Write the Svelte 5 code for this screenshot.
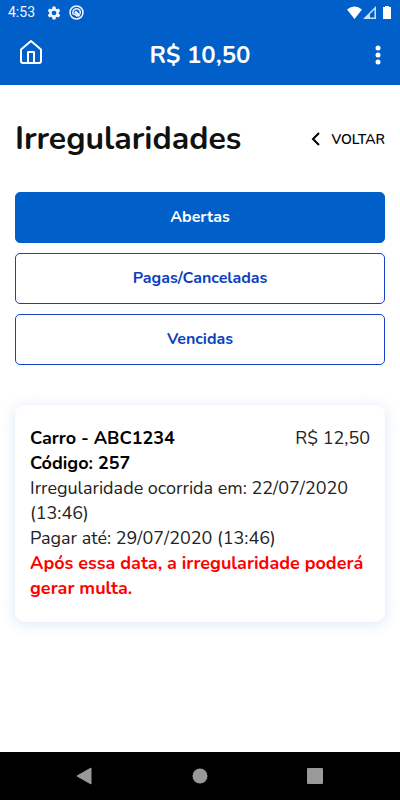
<script lang="ts">
  interface Fine {
    vehicle: string;
    code: number;
    amount: string;
    occurredAt: string;
    payUntil: string;
  }

  const balance = 'R$ 10,50';
  const filters = ['Abertas', 'Pagas/Canceladas', 'Vencidas'];
  const fines: Fine[] = [
    {
      vehicle: 'Carro - ABC1234',
      code: 257,
      amount: 'R$ 12,50',
      occurredAt: '22/07/2020 (13:46)',
      payUntil: '29/07/2020 (13:46)'
    }
  ];

  let selected = $state('Abertas');
  const visible = $derived(selected === 'Abertas' ? fines : []);
</script>

<div class="screen">
  <div class="status-bar">
    <span class="clock">4:53</span>
    <svg width="14" height="14" viewBox="0 0 24 24" aria-hidden="true">
      <path
        fill="currentColor"
        fill-rule="evenodd"
        d="M9.5 1h5l.6 3.2 2 1.2 3.1-1.1 2.5 4.3-2.5 2.2v2.4l2.5 2.2-2.5 4.3-3.1-1.1-2 1.2-.6 3.2h-5l-.6-3.2-2-1.2-3.1 1.1-2.5-4.3 2.5-2.2v-2.4L1.3 8.600l2.5-4.3 3.1 1.1 2-1.2zM12 8a4 4 0 1 0 0 8 4 4 0 0 0 0-8z"
      />
    </svg>
    <svg class="tracker" width="15" height="15" viewBox="0 0 30 30" fill="none" stroke="currentColor" aria-hidden="true">
      <circle cx="15" cy="15" r="13" stroke-width="3" />
      <path stroke-width="3" d="M9 19a7.500 7.500 0 1 1 13-1" />
      <path stroke-width="5" d="M12 13l9 9" />
      <path stroke-width="3" d="M10 18l7 5" />
    </svg>
    <svg class="signals" width="46" height="14" viewBox="0 0 46 14" aria-hidden="true">
      <path fill="currentColor" d="M1 3.500Q8.500-2.500 16 3.500L8.500 13z" />
      <path fill="currentColor" fill-opacity=".8" fill-rule="evenodd" d="M17 13L30 0v13zM24 11.500h4.500V3.500L24 8z" />
      <path fill="currentColor" d="M39 0h4v1h2v12h-8V1h2z" />
    </svg>
  </div>

  <header>
    <button class="icon-button" aria-label="Início">
      <svg width="24" height="26" viewBox="0 0 24 26" fill="none" stroke="currentColor" stroke-width="2" stroke-linejoin="round">
        <path d="M2 10.500L12 2l10 8.500V22a2 2 0 0 1-2 2H4a2 2 0 0 1-2-2z" />
        <path d="M9 24V13h6v11" />
      </svg>
    </button>
    <strong class="balance">{balance}</strong>
    <button class="icon-button menu" aria-label="Menu">
      <svg width="6" height="20" viewBox="0 0 6 20" fill="currentColor">
        <circle cx="3" cy="3" r="2.500" />
        <circle cx="3" cy="10" r="2.500" />
        <circle cx="3" cy="17" r="2.500" />
      </svg>
    </button>
  </header>

  <main>
    <div class="title-row">
      <h1>Irregularidades</h1>
      <button class="back">
        <svg width="10" height="14" viewBox="0 0 10 14" fill="none" stroke="currentColor" stroke-width="2" aria-hidden="true">
          <path d="M8 1L2 7l6 6" />
        </svg>
        VOLTAR
      </button>
    </div>

    <div class="filters">
      {#each filters as filter}
        <button
          class="filter"
          class:active={selected === filter}
          aria-pressed={selected === filter}
          onclick={() => (selected = filter)}
        >
          {filter}
        </button>
      {/each}
    </div>

    {#each visible as fine (fine.code)}
      <article class="card">
        <div class="card-head">
          <strong>{fine.vehicle}</strong>
          <span>{fine.amount}</span>
        </div>
        <strong>Código: {fine.code}</strong>
        <p>Irregularidade ocorrida em: {fine.occurredAt}</p>
        <p>Pagar até: {fine.payUntil}</p>
        <p class="warning">Após essa data, a irregularidade poderá gerar multa.</p>
      </article>
    {/each}
  </main>

  <nav aria-label="Sistema">
    <button aria-label="Voltar">
      <svg width="16" height="18" viewBox="0 0 16 18"><path fill="currentColor" d="M14 1v16L0 9z" stroke="currentColor" stroke-linejoin="round" /></svg>
    </button>
    <button aria-label="Tela inicial">
      <svg width="16" height="16" viewBox="0 0 16 16"><circle fill="currentColor" cx="8" cy="8" r="7.500" /></svg>
    </button>
    <button aria-label="Recentes">
      <svg width="16" height="16" viewBox="0 0 16 16"><rect fill="currentColor" width="16" height="16" rx="1" /></svg>
    </button>
  </nav>
</div>

<style>
  :global(body) {
    margin: 0;
    background: #fff;
  }

  .screen {
    display: flex;
    flex-direction: column;
    min-height: 100vh;
    font-family: Nunito, Lato, sans-serif;
    font-size: 18px;
    line-height: 25px;
    color: #111;
  }

  button {
    padding: 0;
    border: none;
    background: none;
    color: inherit;
    font: inherit;
    cursor: pointer;
  }

  svg {
    display: block;
  }

  .status-bar {
    display: flex;
    align-items: center;
    gap: 8px;
    height: 25px;
    padding: 0 8px;
    background: #005fc8;
    color: #f0f5ff;
  }

  .clock {
    margin-right: 4px;
    font-family: Roboto, sans-serif;
    font-size: 14px;
  }

  .signals {
    margin-left: auto;
    color: #fff;
  }

  header {
    display: grid;
    grid-template-columns: 1fr auto 1fr;
    align-items: center;
    height: 60px;
    padding: 0 19px;
    background: #005fc8;
    color: #fff;
  }

  .icon-button {
    justify-self: start;
    padding-bottom: 6px;
  }

  .icon-button.menu {
    justify-self: end;
    padding-bottom: 0;
  }

  .balance {
    font-size: 24px;
    font-weight: 700;
  }

  main {
    flex: 1;
    padding: 33px 15px;
  }

  .title-row {
    display: flex;
    align-items: center;
    justify-content: space-between;
    margin-bottom: 32px;
  }

  h1 {
    margin: 0;
    font-size: 32px;
    font-weight: 700;
    line-height: 42px;
  }

  .back {
    display: flex;
    align-items: center;
    gap: 10px;
    font-size: 14px;
    font-weight: 600;
    color: #000;
  }

  .filters {
    display: grid;
    gap: 10px;
    margin-bottom: 40px;
  }

  .filter {
    height: 51px;
    border: 1px solid #1741c4;
    border-radius: 5px;
    color: #0a3fc0;
    font-size: 16px;
    font-weight: 700;
  }

  .filter.active {
    border-color: #005fc8;
    background: #005fc8;
    color: #fff;
  }

  .card {
    padding: 21px 15px;
    border-radius: 10px;
    box-shadow: 0 2px 15px rgba(0, 95, 200, 0.14);
    color: #222;
  }

  .card strong {
    font-weight: 700;
    color: #000;
  }

  .card-head {
    display: flex;
    justify-content: space-between;
  }

  .card p {
    margin: 0;
  }

  .card .warning {
    color: #f00;
    font-weight: 700;
  }

  nav {
    display: flex;
    align-items: center;
    justify-content: space-evenly;
    height: 48px;
    background: #000;
    color: #999;
  }

  nav button {
    flex: 0 0 15%;
    display: flex;
    justify-content: center;
  }
</style>
